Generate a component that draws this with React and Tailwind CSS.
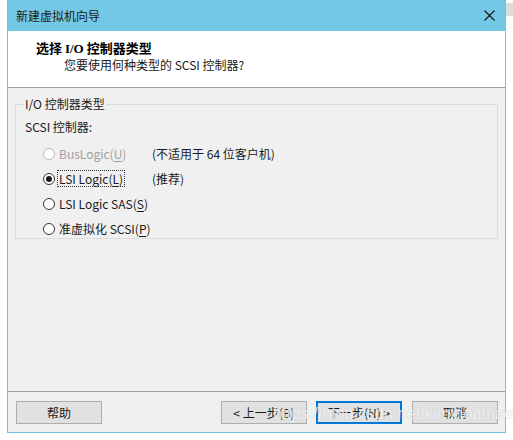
import React from "react";

const font = { fontFamily: '"Microsoft YaHei UI","Noto Sans CJK SC","Noto Sans",sans-serif' };

function Radio({ checked, disabled }) {
  return (
    <span
      className={
        "w-[12px] h-[12px] rounded-full border bg-white flex items-center justify-center shrink-0 " +
        (disabled ? "border-[#bcbcbc] bg-[#f0f0f0]" : "border-[#333333]")
      }
    >
      {checked && <span className="w-[6px] h-[6px] rounded-full bg-[#1a1a1a]" />}
    </span>
  );
}

function Row({ checked, disabled, label, acc, after, note, focus }) {
  return (
    <div className="flex items-center h-[25px]">
      <div className="flex items-center w-[109px]">
        <Radio checked={checked} disabled={disabled} />
        <span
          className={
            "ml-[3px] leading-[15px] px-[1px] " +
            (disabled ? "text-[#a0a0a0] " : "text-[#1a1a1a] ") +
            (focus ? "outline outline-1 outline-dotted outline-[#333]" : "")
          }
        >
          {label}(<span className="underline underline-offset-2">{acc}</span>){after}
        </span>
      </div>
      {note && <span className="text-[#1a1a1a]">{note}</span>}
    </div>
  );
}

function Btn({ children, primary, className = "" }) {
  return (
    <div
      className={
        "w-[86px] h-[23px] flex items-center justify-center text-[12px] text-[#1a1a1a] bg-[#e1e1e1] " +
        (primary ? "border-2 border-[#0078d7]" : "border border-[#adadad]") +
        " " +
        className
      }
    >
      {children}
    </div>
  );
}

export default function App() {
  return (
    <div className="w-[513px] h-[440px] bg-white relative overflow-hidden text-[12px]" style={font}>
      <div className="absolute right-0 top-[3px] w-[7px] h-[13px] bg-[#dcdcdc]" />
      <div className="ml-[7px] w-[499px] h-[433px] flex flex-col border-x border-b border-[#6fc6e2]">
        <div className="h-[31px] bg-[#73c8e5] flex items-center justify-between pl-[8px] pr-[10px] shrink-0">
          <span className="text-[12px] text-[#1a1a1a]">新建虚拟机向导</span>
          <svg width="11" height="11" viewBox="0 0 11 11">
            <path d="M0.5 0.5 L10.5 10.5 M10.5 0.5 L0.5 10.5" stroke="#111" strokeWidth="1.1" />
          </svg>
        </div>
        <div className="h-[57px] bg-white border-b border-[#a0a0a0] shrink-0 flex flex-col pt-[8px]">
          <div
            className="ml-[28px] font-bold text-[13px] leading-[18px] text-black"
            style={{ fontFamily: '"SimSun","Noto Sans CJK SC",serif' }}
          >
            选择 <span style={{ fontFamily: '"Liberation Serif",serif' }}>I/O</span> 控制器类型
          </div>
          <div className="ml-[56px] mt-[-2px] leading-[18px] text-[#1a1a1a]">您要使用何种类型的 SCSI 控制器?</div>
        </div>
        <div className="flex-1 bg-[#f0f0f0] flex flex-col pt-[7px] px-[7px]">
          <fieldset className="border border-[#dcdcdc] h-[144px] pl-[9px] pb-0 pt-0">
            <legend className="px-[1px] ml-[-1px] leading-[18px] text-[#1a1a1a]">I/O 控制器类型</legend>
            <div className="leading-[16px] mt-[6px] text-[#1a1a1a]">SCSI 控制器:</div>
            <div className="flex flex-col ml-[18px] mt-[6px]">
              <Row disabled label="BusLogic" acc="U" note="(不适用于 64 位客户机)" />
              <Row checked focus label="LSI Logic" acc="L" note="(推荐)" />
              <Row label="LSI Logic SAS" acc="S" />
              <Row label="准虚拟化 SCSI" acc="P" />
            </div>
          </fieldset>
        </div>
        <div className="h-[41px] bg-[#f0f0f0] border-t border-[#a0a0a0] shrink-0 flex items-start pt-[9px] pl-[8px] relative">
          <Btn>帮助</Btn>
          <Btn className="ml-[119px]">&lt; 上一步(B)</Btn>
          <Btn primary className="ml-[9px]">下一步(N) &gt;</Btn>
          <Btn className="ml-[10px]">取消</Btn>
          <span
            className="absolute left-[265px] top-[10px] text-[16px] text-white/75 tracking-[0.2px] pointer-events-none"
            style={{ fontFamily: '"Liberation Sans",Arial,sans-serif', textShadow: "0 0 1px rgba(150,150,150,0.45)" }}
          >
            https://blog.csdn.net/kiminoamae
          </span>
        </div>
      </div>
    </div>
  );
}
